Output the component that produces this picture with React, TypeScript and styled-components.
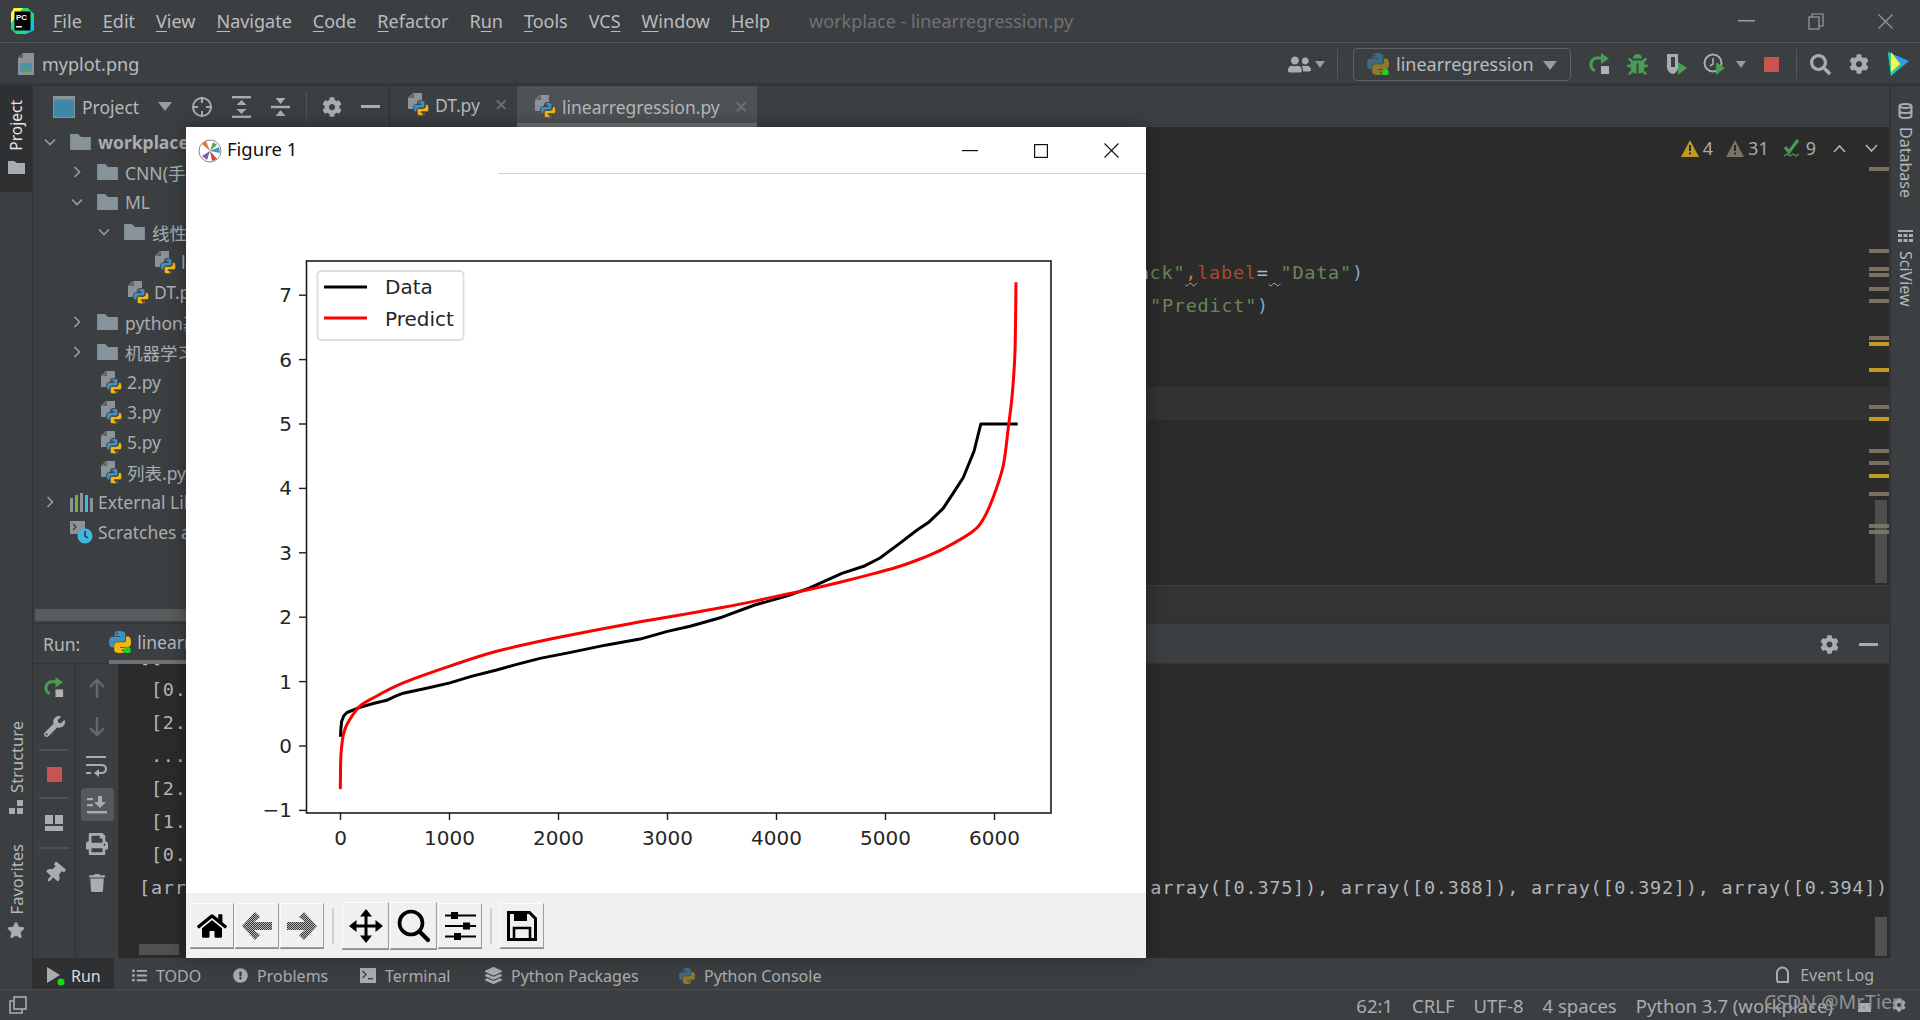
import React from "react";
import styled, { createGlobalStyle } from "styled-components";
import { FaCog, FaWrench, FaTrash, FaPrint, FaThumbtack, FaBug, FaStar, FaExclamationCircle, FaLayerGroup, FaHome, FaUserFriends, FaListUl, FaSearch } from "react-icons/fa";

const Global = createGlobalStyle`
  html, body { margin: 0; padding: 0; background: #3c3f41; overflow: hidden; }
  * { box-sizing: border-box; }
`;
const UI = `"Noto Sans", "Noto Sans CJK SC", "Liberation Sans", sans-serif`;
const MONO = `"DejaVu Sans Mono", "Liberation Mono", monospace`;

const Page = styled.div`
  position: relative; width: 1920px; height: 1020px; overflow: hidden;
  display: flex; flex-direction: column;
  background: #3c3f41; color: #b4b8bb; font-family: ${UI};
`;
const TitleBar = styled.header`
  height: 43px; flex: none; display: flex; align-items: center;
  border-bottom: 1px solid #515658; padding-left: 10px; position: relative;
`;
const MenuList = styled.nav`display: flex; margin-left: 18px; gap: 21px; font-size: 18px;`;
const MenuItem = styled.span`color: #b9bcbe; u { text-underline-offset: 3px; text-decoration-thickness: 1px; }`;
const WindowTitle = styled.span`margin-left: 39px; font-size: 18px; color: #6f7274;`;
const WinControls = styled.div`margin-left: auto; display: flex; align-items: center; gap: 53px; padding-right: 27px; color: #9b9ea0;`;

const NavBar = styled.div`height: 43px; flex: none; display: flex; align-items: center; padding: 2px 0 0 18px; border-bottom: 3px solid #333537;`;
const Crumb = styled.span`font-size: 18px; margin-left: 8px; color: #b9bcbe;`;
const NavGroup = styled.div`margin-left: auto; display: flex; align-items: center; padding-right: 10px;`;
const NavSlot = styled.span<{ $ml: number }>`display: inline-flex; align-items: center; margin-left: ${p => p.$ml}px;`;
const NavSep = styled.span<{ $ml: number }>`width: 1px; height: 30px; background: #56595b; margin-left: ${p => p.$ml}px;`;
const RunConfig = styled.div`
  width: 218px; height: 33px; margin-left: 15px; border: 1.5px solid #5e6265; border-radius: 4px;
  display: flex; align-items: center; padding-left: 13px; gap: 7px; font-size: 18px; color: #b9bcbe; position: relative;
`;
const ConfigCaret = styled.span`position: absolute; right: 13px; top: 12px; display: flex;`;
const Caret = styled.span<{ $c?: string; $s?: number }>`
  display: inline-block; width: 0; height: 0;
  border-left: ${p => p.$s ?? 6}px solid transparent; border-right: ${p => p.$s ?? 6}px solid transparent;
  border-top: ${p => (p.$s ?? 6) + 2}px solid ${p => p.$c ?? "#9a9da0"};
`;
const StopBox = styled.span<{ $size: number }>`display: block; width: ${p => p.$size}px; height: ${p => p.$size}px; background: #c75450;`;

const Main = styled.div`flex: 1; display: flex; min-height: 0;`;
const LeftStrip = styled.aside`width: 33px; flex: none; display: flex; flex-direction: column; align-items: center; border-right: 1px solid #2f3133; padding-bottom: 19px;`;
const StripActive = styled.div`width: 32px; height: 106px; background: #2e3032; display: flex; flex-direction: column; align-items: center; padding-top: 14px; gap: 10px;`;
const VertLabel = styled.span<{ $bright?: boolean }>`
  writing-mode: vertical-rl; transform: rotate(180deg); font-size: ${p => (p.$bright ? 15.5 : 16.5)}px;
  color: ${p => (p.$bright ? "#e6e6e6" : "#b4b8bb")};
`;
const StripGroup = styled.div<{ $top?: boolean }>`display: flex; flex-direction: column; align-items: center; gap: 7px; margin-top: ${p => (p.$top ? "auto" : "29px")};`;
const RightStrip = styled.aside`width: 31px; flex: none; display: flex; flex-direction: column; align-items: center; border-left: 2px solid #333537; padding-top: 17px; gap: 8px;`;
const VertRight = styled.span<{ $mb?: number }>`writing-mode: vertical-rl; font-size: 16px; color: #b4b8bb; margin-bottom: ${p => p.$mb ?? 0}px;`;

const Center = styled.div`flex: 1; min-width: 0; display: flex; flex-direction: column;`;
const TopArea = styled.div`height: 537px; flex: none; display: flex;`;
const ProjectPanel = styled.section`width: 357px; flex: none; display: flex; flex-direction: column; border-right: 1px solid #2f3133;`;
const PanelHeader = styled.div`height: 41px; flex: none; display: flex; align-items: center; padding-left: 20px; font-size: 17.5px; color: #b4b8bb;`;
const HSlot = styled.span<{ $ml: number }>`display: inline-flex; margin-left: ${p => p.$ml}px;`;
const HSep = styled.span<{ $ml: number }>`width: 1px; height: 30px; background: #515456; margin-left: ${p => p.$ml}px;`;
const Tree = styled.div`flex: 1; overflow: hidden;`;
const TreeRow = styled.div<{ $level: number }>`
  height: 30px; display: flex; align-items: center; white-space: nowrap;
  padding-left: ${p => 8 + p.$level * 27}px; font-size: 17.5px; color: #a9adb0;
`;
const Chev = styled.span`width: 18px; flex: none; display: flex; justify-content: center;`;
const TreeIcon = styled.span<{ $file?: boolean }>`
  display: flex; flex: none; width: ${p => (p.$file ? 21 : 21)}px;
  margin-left: ${p => (p.$file ? 33 : 11)}px; margin-right: ${p => (p.$file ? 5 : 7)}px;
`;
const TreeName = styled.span<{ $bold?: boolean }>`font-weight: ${p => (p.$bold ? 700 : 400)};`;
const HScroll = styled.div`height: 12px; margin: 0 0 2px 2px; background: #595b5d; flex: none;`;

const EditorCol = styled.section`flex: 1; min-width: 0; display: flex; flex-direction: column;`;
const TabBar = styled.div`height: 41px; flex: none; display: flex; font-size: 17.5px; color: #b4b8bb;`;
const Tab = styled.div<{ $active?: boolean; $w: number }>`
  width: ${p => p.$w}px; display: flex; align-items: center; padding-left: 18px; gap: 6px;
  background: ${p => (p.$active ? "#4e5254" : "transparent")};
  border-bottom: 4px solid ${p => (p.$active ? "#6e7275" : "transparent")};
  padding-top: ${p => (p.$active ? 4 : 0)}px;
`;
const TabX = styled.span`margin-left: 8px; color: #6f7274; font-size: 17px; font-weight: 300;`;
const Editor = styled.div`flex: 1; background: #2b2b2b; position: relative; overflow: hidden; padding-top: 129px;`;
const CodeRow = styled.div<{ $pad: number }>`
  height: 33px; line-height: 33px; white-space: pre; padding-left: ${p => p.$pad}px;
  font-family: ${MONO}; font-size: 18.5px; letter-spacing: 0.76px; color: #a9b7c6;
`;
const Str = styled.span`color: #6a8759;`;
const Kw = styled.span`color: #aa4926;`;
const Paren = styled.span`color: #7fa5c9;`;
const Wavy = styled.span<{ $c: string }>`color: ${p => p.$c}; text-decoration: underline wavy #b9a97e 1px; text-underline-offset: 3px;`;
const LineHL = styled.div`position: absolute; left: 0; right: 0; top: 260px; height: 33px; background: #323232;`;
const Mark = styled.i<{ $y: number; $hot?: boolean }>`
  position: absolute; right: 0; width: 20px; height: 4px; top: ${p => p.$y - 127}px;
  background: ${p => (p.$hot ? "#c19a1f" : "#7a7260")};
`;
const Thumb = styled.div`position: absolute; right: 2px; width: 12px; top: 373px; height: 83px; background: rgba(120,120,120,.45);`;
const Inspect = styled.div`position: absolute; right: 11px; top: 9px; display: flex; align-items: center; font-size: 18px; color: #a9adb0;`;
const InspectItem = styled.span<{ $ml: number }>`display: inline-flex; align-items: center; gap: 4px; margin-left: ${p => p.$ml}px;`;
const Breadbar = styled.div`height: 38px; flex: none; background: #313335; border-top: 1px solid #3a3c3e;`;

const RunPanel = styled.section`flex: 1; display: flex; flex-direction: column; min-height: 0; border-top: 1px solid #2f3133;`;
const RunHeader = styled.div`height: 40px; flex: none; display: flex; align-items: center; padding-left: 10px; border-bottom: 1px solid #323436; font-size: 17.5px; position: relative; color: #b4b8bb;`;
const RunTab = styled.div`margin-left: 29px; width: 98px; height: 40px; display: flex; align-items: center; gap: 6px; border-bottom: 4px solid #6e7275; white-space: nowrap; overflow: hidden;`;
const RunTools = styled.div`position: absolute; right: 11px; top: 11px; display: flex; align-items: center; gap: 20px; color: #a9adb0;`;
const RunBody = styled.div`flex: 1; display: flex; min-height: 0;`;
const RunCol = styled.div`width: 43px; flex: none; border-right: 1px solid #2f3133; display: flex; flex-direction: column; align-items: center; padding-top: 4px; color: #a9adb0;`;
const RunBtn = styled.div<{ $h?: number; $on?: boolean; $dim?: boolean }>`
  width: 33px; height: ${p => p.$h ?? 39}px; flex: none; display: flex; align-items: center; justify-content: center; border-radius: 4px;
  background: ${p => (p.$on ? "#56595c" : "transparent")}; color: ${p => (p.$dim ? "#66696b" : "#a9adb0")};
  ${p => (p.$on ? "height: 33px; margin: 3px 0;" : "")}
`;
const RunDiv = styled.i`width: 30px; height: 2px; background: #4e5153; flex: none; margin: 3px 0;`;
const Console = styled.div`
  flex: 1; min-width: 0; background: #2b2b2b; position: relative; overflow: hidden; padding-left: 20px;
  font-family: ${MONO}; font-size: 18.5px; letter-spacing: 0.76px; color: #b0b6bd;
`;
const ConsoleRow = styled.div<{ $first?: boolean }>`height: 33px; line-height: 33px; white-space: pre; margin-top: ${p => (p.$first ? -24 : 0)}px;`;
const ConsoleThumbV = styled.div`position: absolute; right: 2px; bottom: 2px; width: 12px; height: 39px; background: #4f5050;`;
const ConsoleThumbH = styled.div`position: absolute; left: 20px; bottom: 3px; width: 40px; height: 11px; background: #4f5050;`;

const BottomTabs = styled.div`height: 32px; flex: none; display: flex; align-items: stretch; padding-left: 32px; border-bottom: 1px solid #4a4d4f; font-size: 16px; color: #a9adb0; position: relative; z-index: 1;`;
const BTab = styled.div<{ $w: number; $on?: boolean; $pad?: number }>`
  width: ${p => p.$w}px; display: flex; align-items: center; gap: ${p => (p.$on ? 5 : 9)}px; flex: none;
  padding: 4px 0 0 ${p => p.$pad ?? 0}px;
  background: ${p => (p.$on ? "#2e3032" : "transparent")}; color: ${p => (p.$on ? "#dcdcdc" : "#a9adb0")};
`;
const EventLog = styled.div`margin-left: auto; margin-right: 46px; padding-top: 2px; display: flex; align-items: center; gap: 8px;`;
const StatusBar = styled.footer`height: 30px; flex: none; display: flex; align-items: center; padding-left: 9px; font-size: 18.5px; color: #a9adb0; position: relative;`;
const StatusRight = styled.div`margin-left: auto; display: flex; gap: 19px; padding-right: 87px;`;
const Watermark = styled.span`position: absolute; right: 16px; top: -2px; color: #8f9193; font-size: 19.5px;`;
const StatusIcons = styled.div`position: absolute; right: 14px; top: 8px; display: flex; gap: 21px; align-items: center; color: #a9adb0;`;

const Figure = styled.div`
  position: absolute; left: 186px; top: 127px; width: 960px; height: 831px; background: #fff;
  display: flex; flex-direction: column; box-shadow: 0 0 18px rgba(0,0,0,.35); color: #111; z-index: 2;
`;
const FigTitle = styled.div`height: 47px; flex: none; display: flex; align-items: center; padding-left: 12px; font-size: 18.5px; position: relative; color: #111;`;
const FigName = styled.span`margin: -4px 0 0 5px;`;
const FigRule = styled.i`position: absolute; left: 312px; right: 0; bottom: 0; height: 1px; background: #d4d4d4;`;
const FigControls = styled.div`margin-left: auto; display: flex; align-items: center; gap: 56px; padding-right: 27px;`;
const Plot = styled.svg`display: block; flex: none;`;
const FigBar = styled.div`height: 65px; flex: none; background: #f0f0f0; display: flex; align-items: center; gap: 1px; padding-left: 4px;`;
const FigBtn = styled.button<{ $w: number; $big?: boolean }>`
  width: ${p => p.$w}px; height: ${p => (p.$big ? 47 : 45)}px; flex: none; padding: 0; display: flex; align-items: center; justify-content: center;
  background: #f0f0f0; color: #000; border: 1px solid; border-color: #fbfbfb #9d9d9d #9d9d9d #fbfbfb;
  box-shadow: 0 1px 0 #8e8e8e;
`;
const FigSep = styled.i`width: 2px; height: 36px; background: #d0d0d0; margin: 0 7px; flex: none;`;

/* ---------- drawings ---------- */
const PY_B = "M11.914 0C5.82 0 6.2 2.656 6.2 2.656l.007 2.752h5.814v.826H3.9S0 5.789 0 11.969c0 6.18 3.403 5.96 3.403 5.96h2.03v-2.867s-.109-3.42 3.35-3.42h5.766s3.24.052 3.24-3.148V3.202S18.28 0 11.913 0zM8.708 1.85c.578 0 1.046.47 1.046 1.052 0 .581-.468 1.051-1.046 1.051-.579 0-1.046-.47-1.046-1.051 0-.582.467-1.052 1.046-1.052z";
const PY_Y = "M12.087 24c6.092 0 5.712-2.656 5.712-2.656l-.007-2.752h-5.814v-.826h8.123s3.9.445 3.9-5.735c0-6.18-3.404-5.96-3.404-5.96h-2.03v2.867s.109 3.42-3.35 3.42H8.951s-3.24-.052-3.24 3.148v5.292S5.22 24 12.087 24zm3.206-1.85c-.578 0-1.046-.47-1.046-1.052 0-.581.468-1.051 1.046-1.051.579 0 1.046.47 1.046 1.051 0 .582-.467 1.052-1.046 1.052z";
const Py = ({ s = 22, dim = false, dot = false }: { s?: number; dim?: boolean; dot?: boolean }) => (
  <svg width={s} height={s} viewBox="0 0 24 24" style={{ flex: "none" }}>
    <path d={PY_B} fill={dim ? "#3f6a85" : "#3c92c4"} />
    <path d={PY_Y} fill={dim ? "#8d7a2c" : "#f2b80f"} />
    {dot && <circle cx="20" cy="21" r="3.6" fill="#16d916" />}
  </svg>
);
const PyFile = () => (
  <svg width="21" height="23" viewBox="0 0 21 23" style={{ flex: "none" }}>
    <path d="M5 0h9v16H0V5z" fill="#8a9399" />
    <path d="M1 5l5-5v5z" fill="#5d6367" />
    <g transform="translate(5.5 7.5) scale(.64)">
      <path d={PY_B} fill="#3c92c4" stroke="#3c3f41" strokeWidth="1.4" />
      <path d={PY_Y} fill="#f2b80f" stroke="#3c3f41" strokeWidth="1.4" />
    </g>
  </svg>
);
const Folder = ({ w = 21 }: { w?: number }) => (
  <svg width={w} height={w * 0.8} viewBox="0 0 21 17"><path d="M0 0h8l3 3h10v14H0z" fill="#87939a" /></svg>
);
const ChevIcon = ({ open }: { open?: boolean }) => (
  <svg width="14" height="14" viewBox="0 0 14 14" fill="none" stroke="#9a9da0" strokeWidth="1.6">
    <path d={open ? "M2 4.5l5 5 5-5" : "M4.5 2l5 5-5 5"} />
  </svg>
);
const ImgFile = () => (
  <svg width="16" height="22" viewBox="0 0 16 22"><path d="M5 0h11v22H0V5z" fill="#8a9399" /><path d="M0 5l5-5v5z" fill="#5d6367" /><rect x="2" y="10" width="12" height="9" fill="#4a92a8" /><path d="M2 19l5-5 7 5z" fill="#5a9e58" /></svg>
);
const Rerun = ({ s = 22 }: { s?: number }) => (
  <svg width={s} height={s} viewBox="0 0 22 22" fill="none">
    <path d="M15 5H9a6.500 6.500 0 0 0-3 12.500" stroke="#499c54" strokeWidth="3.2" />
    <path d="M12 0l8 5.500-8 5.500z" fill="#499c54" />
    <rect x="12" y="13" width="8" height="8" fill="#b0b2b4" />
  </svg>
);
const Cover = () => (
  <svg width="23" height="24" viewBox="0 0 23 24"><path d="M1 2h11v14q-1 5-5 6-5-1-6-6z" fill="#a9adb0" /><path d="M5 5h4v10H5z" fill="#3c3f41" /><path d="M12 10l9 6-9 7z" fill="#499c54" /></svg>
);
const Profile = () => (
  <svg width="24" height="24" viewBox="0 0 24 24" fill="none"><circle cx="10" cy="11" r="8.5" stroke="#a9adb0" strokeWidth="2" /><path d="M10 6v6l-3 2" stroke="#a9adb0" strokeWidth="1.6" /><path d="M13 10l9 6-9 7z" fill="#499c54" /></svg>
);
const PcLogo = () => (
  <svg width="25" height="28" viewBox="0 0 25 28">
    <path d="M4 1h14l6 6v16l-8 4H6l-5-5V6z" fill="#21d789" />
    <path d="M4 1h9L1 16V6z" fill="#fcf84a" />
    <path d="M16 27l8-4V10z" fill="#07c3f2" />
    <rect x="4.5" y="4.5" width="16" height="19" fill="#000" />
    <text x="6" y="13" fontSize="8" fontWeight="700" fill="#fff" fontFamily="Liberation Sans">PC</text>
    <rect x="6" y="19" width="6" height="1.5" fill="#fff" />
  </svg>
);
const IdeLogo = () => (
  <svg width="23" height="26" viewBox="0 0 23 26"><path d="M1 1l21 9L4 25z" fill="#2f9ee0" /><path d="M1 1l14 12-11 12z" fill="#21d789" /><path d="M4 1l9 12-9 8z" fill="#fcf84a" /></svg>
);
const Tri = ({ c, mark = "#2b2b2b" }: { c: string; mark?: string }) => (
  <svg width="18" height="17" viewBox="0 0 18 17"><path d="M9 0l9 17H0z" fill={c} /><rect x="8" y="5" width="2" height="6" fill={mark} /><rect x="8" y="12.5" width="2" height="2" fill={mark} /></svg>
);
const Check = () => (
  <svg width="19" height="19" viewBox="0 0 19 19" fill="none"><path d="M2 8l4 5 9-12" stroke="#499c54" strokeWidth="3.2" /><path d="M1 17l3-2 3 2 3-2 3 2 3-2" stroke="#499c54" strokeWidth="1.2" /></svg>
);
const SmallChevron = ({ up }: { up?: boolean }) => (
  <svg width="13" height="9" viewBox="0 0 13 9" fill="none" stroke="#b0b3b5" strokeWidth="1.6"><path d={up ? "M1 8l5.5-6L12 8" : "M1 1l5.5 6L12 1"} /></svg>
);
const Locate = () => (
  <svg width="22" height="22" viewBox="0 0 22 22" fill="none" stroke="#a9adb0" strokeWidth="2"><circle cx="11" cy="11" r="9" /><path d="M11 1v6M11 15v6M1 11h6M15 11h6" /></svg>
);
const ExpandAll = () => (
  <svg width="19" height="22" viewBox="0 0 19 22" fill="#a9adb0"><rect width="19" height="2.4" /><rect y="19.6" width="19" height="2.4" /><path d="M9.5 4l5 5h-10zM9.5 18l5-5h-10z" /></svg>
);
const CollapseAll = () => (
  <svg width="19" height="22" viewBox="0 0 19 22" fill="#a9adb0"><rect y="9.8" width="19" height="2.4" /><path d="M9.5 8l5-6h-10zM9.5 14l5 6h-10z" /></svg>
);
const WinIcon = () => (
  <svg width="22" height="22" viewBox="0 0 22 22"><rect x=".5" y=".5" width="21" height="21" fill="#3f87a6" stroke="#8a9399" /><rect x=".5" y=".5" width="21" height="3" fill="#8a9399" /></svg>
);
const Minus = () => <svg width="19" height="4" viewBox="0 0 19 4"><rect width="19" height="3" fill="#a9adb0" /></svg>;
const Wrap = () => (
  <svg width="22" height="22" viewBox="0 0 22 22" fill="none" stroke="#a9adb0" strokeWidth="2"><path d="M0 2h20M0 10h15q5 0 5 4t-5 4H11M0 18h5" /><path d="M13 14l-5 4 5 4z" fill="#a9adb0" stroke="none" /></svg>
);
const ScrollEnd = () => (
  <svg width="20" height="18" viewBox="0 0 20 18" fill="#a9adb0"><rect y="15" width="20" height="2.4" /><rect y="2" width="6" height="2.2" /><rect y="8" width="6" height="2.2" /><path d="M11 0h4v6h4l-6 6-6-6h4z" /></svg>
);
const Arrow = ({ up }: { up?: boolean }) => (
  <svg width="16" height="20" viewBox="0 0 16 20" fill="none" stroke="#66696b" strokeWidth="2.4"><path d={up ? "M8 20V2M1 9l7-7 7 7" : "M8 0v18M1 11l7 7 7-7"} /></svg>
);
const Layout = () => (
  <svg width="18" height="16" viewBox="0 0 18 16" fill="#a9adb0"><rect width="8" height="9" /><rect x="10" width="8" height="9" /><rect y="11" width="18" height="5" /></svg>
);
const SmallFolder = () => <svg width="17" height="13" viewBox="0 0 17 13"><path d="M0 0h6l3 2h8v11H0z" fill="#a9adb0" /></svg>;
const Cubes = () => <svg width="15" height="15" viewBox="0 0 15 15" fill="#a9adb0"><rect x="0" y="8" width="6" height="6" /><rect x="8" y="8" width="6" height="6" /><rect x="8" y="0" width="6" height="6" /></svg>;
const Db = () => <svg width="15" height="16" viewBox="0 0 15 16" fill="none" stroke="#a9adb0" strokeWidth="2"><ellipse cx="7.5" cy="3" rx="6" ry="2" /><path d="M1.5 3v10c0 1 2.5 2 6 2s6-1 6-2V3M1.500 8c0 1 2.500 2 6 2s6-1 6-2" /></svg>;
const Grid3 = () => <svg width="15" height="13" viewBox="0 0 15 13" fill="#a9adb0"><rect width="15" height="2" /><rect y="4" width="4" height="3" /><rect x="5.500" y="4" width="4" height="3" /><rect x="11" y="4" width="4" height="3" /><rect y="9" width="4" height="3" /><rect x="5.500" y="9" width="4" height="3" /><rect x="11" y="9" width="4" height="3" /></svg>;
const Bars = () => <svg width="23" height="19" viewBox="0 0 23 19" style={{ flex: "none" }}><rect y="5" width="3" height="14" fill="#8a9399" /><rect x="5" y="2" width="3" height="17" fill="#6cb33f" /><rect x="10" y="0" width="3" height="19" fill="#8a9399" /><rect x="15" y="2" width="3" height="17" fill="#40b6e0" /><rect x="20" y="5" width="3" height="14" fill="#8a9399" /></svg>;
const Scratch = () => (
  <svg width="23" height="23" viewBox="0 0 23 23" style={{ flex: "none" }}><rect y="0" width="15" height="13" fill="#8a9399" /><path d="M3 3l3 3-3 3" fill="none" stroke="#3c3f41" strokeWidth="1.4" /><circle cx="15" cy="15" r="7.500" fill="#40b6e0" /><path d="M15 10v5l3 2" fill="none" stroke="#26343c" strokeWidth="1.5" /></svg>
);
const RunPlay = () => <svg width="20" height="20" viewBox="0 0 20 20"><path d="M1 1l13 8L1 17z" fill="#a9adb0" /><circle cx="15" cy="16" r="3.500" fill="#16d916" /></svg>;
const EventIcon = () => <svg width="19" height="20" viewBox="0 0 19 20" fill="none" stroke="#a9adb0" strokeWidth="2"><path d="M5 17h10V8a5.500 5.500 0 0 0-11 0v6q0 3 1 3z" /></svg>;
const TermIcon = () => <svg width="16" height="15" viewBox="0 0 16 15"><rect width="16" height="15" fill="#a9adb0" /><path d="M2.500 3l3.500 3.500-3.500 3.500" fill="none" stroke="#3c3f41" strokeWidth="1.400" /><rect x="8" y="10" width="5" height="1.400" fill="#3c3f41" /></svg>;
const StatusBox = () => <svg width="18" height="18" viewBox="0 0 18 18" fill="none" stroke="#a9adb0" strokeWidth="1.6"><rect x="5" y="1" width="12" height="12" /><path d="M5 5H1v12h12v-4" /></svg>;
const Restore = () => <svg width="17" height="17" viewBox="0 0 17 17" fill="none" stroke="#9b9ea0" strokeWidth="1.2"><rect x="1" y="4" width="10" height="12" /><path d="M4 4V1h11v12h-4" /></svg>;
const XMark = ({ s = 15, c = "#9b9ea0" }: { s?: number; c?: string }) => <svg width={s} height={s} viewBox="0 0 15 15" fill="none" stroke={c} strokeWidth="1.1"><path d="M.5.500l14 14M14.500.500l-14 14" /></svg>;
const Mpl = () => (
  <svg width="24" height="24" viewBox="0 0 24 24"><circle cx="12" cy="12" r="11" fill="#fff" stroke="#888" /><path d="M12 12L4 5l4-3z" fill="#e0783a" /><path d="M12 12l9-4 1 6z" fill="#4a90c2" /><path d="M12 12l-3 9-5-4z" fill="#7a5ea8" /><path d="M12 12l3-9 4 3z" fill="#5aa45a" /><path d="M12 12l7 8-5 2z" fill="#c44" /></svg>
);
const Dither = ({ left }: { left?: boolean }) => (
  <svg width="30" height="30" viewBox="0 0 30 30">
    <defs><pattern id={left ? "dl" : "dr"} width="2" height="2" patternUnits="userSpaceOnUse"><rect width="2" height="2" fill="#bdbdbd" /><rect width="1" height="1" fill="#333" /><rect x="1" y="1" width="1" height="1" fill="#333" /></pattern></defs>
    <path d={left ? "M0 15L13 1l5 5-6 5h18v8H12l6 5-5 5z" : "M30 15L17 1l-5 5 6 5H0v8h18l-6 5 5 5z"} fill={`url(#${left ? "dl" : "dr"})`} />
  </svg>
);
const PanIcon = () => (
  <svg width="34" height="34" viewBox="0 0 34 34"><path d="M15.500 7h3v8.500H27v3h-8.500V27h-3v-8.500H7v-3h8.500z" /><path d="M17 0l6 7.500H11zM17 34l-6-7.500h12zM0 17l7.500-6v12zM34 17l-7.500 6V11z" /></svg>
);
const ZoomIcon = () => (
  <svg width="34" height="34" viewBox="0 0 34 34" fill="none" stroke="#000"><circle cx="14" cy="14" r="11.500" strokeWidth="3.600" /><path d="M22.500 22.500L31 31" strokeWidth="4.200" strokeLinecap="round" /></svg>
);
const SliderIcon = () => (
  <svg width="31" height="28" viewBox="0 0 31 28"><path d="M0 3.500h31M0 14h31M0 24.500h31" stroke="#000" strokeWidth="1.800" /><rect x="6" y="0" width="7" height="7" /><rect x="18" y="10.500" width="7" height="7" /><rect x="9" y="21" width="7" height="7" /></svg>
);
const SaveIcon = () => (
  <svg width="30" height="30" viewBox="0 0 30 30" fill="none" stroke="#000" strokeWidth="3"><path d="M1.500 1.500h21l6 6v21h-27z" /><rect x="7" y="2" width="13" height="8" fill="#000" stroke="none" /><path d="M7 28V17h16v11" strokeWidth="2.600" /></svg>
);

/* ---------- chart data ---------- */
const black: [number, number][] = [[0,.145],[3,.25],[10,.38],[30,.47],[60,.52],[178,.6],[300,.66],[424,.71],[500,.77],[575,.82],[800,.9],[1004,.98],[1200,1.08],[1432,1.18],[1600,1.26],[1830,1.36],[2100,1.45],[2442,1.57],[2748,1.66],[3000,1.78],[3207,1.86],[3500,2.0],[3800,2.19],[4100,2.33],[4300,2.45],[4600,2.68],[4800,2.79],[4950,2.92],[5133,3.15],[5287,3.35],[5400,3.48],[5529,3.69],[5630,3.95],[5714,4.17],[5813,4.58],[5874,5],[6213,5]];
const red: [number, number][] = [[-2,-.67],[2,-.22],[10,-.02],[23,.145],[50,.3],[102,.455],[178,.62],[298,.745],[575,.98],[1004,1.24],[1432,1.47],[1983,1.68],[2593,1.88],[3207,2.06],[3500,2.15],[3800,2.25],[4100,2.36],[4300,2.43],[4600,2.55],[4900,2.68],[5133,2.79],[5340,2.92],[5529,3.06],[5790,3.32],[5896,3.52],[5988,3.86],[6080,4.35],[6126,4.93],[6162,5.45],[6188,6.13],[6197,7.2]];
const px = (x: number) => 154.5 + x * 0.109;
const py = (y: number) => 572 - y * 64.4;
const pts = (a: [number, number][]) => a.map(([x, y]) => `${px(x).toFixed(1)},${py(y).toFixed(1)}`).join(" ");
const spline = (a: [number, number][]) => {
  const q = a.map(([x, y]) => [px(x), py(y)]);
  let d = `M${q[0][0].toFixed(1)} ${q[0][1].toFixed(1)}`;
  for (let i = 0; i < q.length - 1; i++) {
    const p0 = q[Math.max(i - 1, 0)], p1 = q[i], p2 = q[i + 1], p3 = q[Math.min(i + 2, q.length - 1)];
    const c1 = [p1[0] + (p2[0] - p0[0]) / 6, p1[1] + (p2[1] - p0[1]) / 6];
    const c2 = [p2[0] - (p3[0] - p1[0]) / 6, p2[1] - (p3[1] - p1[1]) / 6];
    d += `C${c1[0].toFixed(1)} ${c1[1].toFixed(1)} ${c2[0].toFixed(1)} ${c2[1].toFixed(1)} ${p2[0].toFixed(1)} ${p2[1].toFixed(1)}`;
  }
  return d;
};

const Chart = () => (
  <Plot width="960" height="719" viewBox="0 0 960 719">
    <rect x="120.500" y="87" width="744.500" height="552" fill="#fff" stroke="#1c1c1c" strokeWidth="1.6" />
    {[0, 1000, 2000, 3000, 4000, 5000, 6000].map(v => (
      <g key={v}>
        <line x1={px(v)} x2={px(v)} y1="639" y2="646" stroke="#1c1c1c" strokeWidth="1.4" />
        <text x={px(v)} y="671" textAnchor="middle" fontFamily="DejaVu Sans" fontSize="20" fill="#262626">{v}</text>
      </g>
    ))}
    {[-1, 0, 1, 2, 3, 4, 5, 6, 7].map(v => (
      <g key={v}>
        <line x1="113" x2="120.500" y1={py(v)} y2={py(v)} stroke="#1c1c1c" strokeWidth="1.4" />
        <text x="106" y={py(v) + 7} textAnchor="end" fontFamily="DejaVu Sans" fontSize="20" fill="#262626">{v < 0 ? `−${-v}` : v}</text>
      </g>
    ))}
    <polyline points={pts(black)} fill="none" stroke="#000" strokeWidth="3" strokeLinejoin="round" />
    <path d={spline(red)} fill="none" stroke="#f00" strokeWidth="3" strokeLinejoin="round" />
    <rect x="131.500" y="97" width="146" height="69" rx="4" fill="#fff" fillOpacity=".85" stroke="#dcdcdc" strokeWidth="1.800" />
    <line x1="138" x2="181" y1="113" y2="113" stroke="#000" strokeWidth="3" />
    <line x1="138" x2="181" y1="144" y2="144" stroke="#f00" strokeWidth="3" />
    <text x="199" y="120" fontFamily="DejaVu Sans" fontSize="20" fill="#262626">Data</text>
    <text x="199" y="152" fontFamily="DejaVu Sans" fontSize="20" fill="#262626">Predict</text>
  </Plot>
);

const menus: [string, string, string][] = [["", "F", "ile"], ["", "E", "dit"], ["", "V", "iew"], ["", "N", "avigate"], ["", "C", "ode"], ["", "R", "efactor"], ["R", "u", "n"], ["", "T", "ools"], ["VC", "S", ""], ["", "W", "indow"], ["", "H", "elp"]];
const marks: [number, boolean?][] = [[167],[249],[267],[273],[287],[299],[336],[342,true],[368,true],[405],[417,true],[449],[461],[474,true],[492],[524],[530]];
type T = { l: number; name: string; kind: "dir" | "open" | "file" | "ext" | "scr"; bold?: boolean };
const tree: T[] = [
  { l: 0, name: "workplace", kind: "open", bold: true },
  { l: 1, name: "CNN(手写数字)", kind: "dir" },
  { l: 1, name: "ML", kind: "open" },
  { l: 2, name: "线性回归", kind: "open" },
  { l: 3, name: "linearregression.py", kind: "file" },
  { l: 2, name: "DT.py", kind: "file" },
  { l: 1, name: "python基础", kind: "dir" },
  { l: 1, name: "机器学习", kind: "dir" },
  { l: 1, name: "2.py", kind: "file" },
  { l: 1, name: "3.py", kind: "file" },
  { l: 1, name: "5.py", kind: "file" },
  { l: 1, name: "列表.py", kind: "file" },
  { l: 0, name: "External Libraries", kind: "ext" },
  { l: 0, name: "Scratches and Consoles", kind: "scr" },
];

export default function App() {
  return (
    <Page>
      <Global />
      <TitleBar>
        <PcLogo />
        <MenuList>
          {menus.map(([a, b, c]) => <MenuItem key={a + b + c}>{a}<u>{b}</u>{c}</MenuItem>)}
        </MenuList>
        <WindowTitle>workplace - linearregression.py</WindowTitle>
        <WinControls>
          <svg width="17" height="2"><rect width="17" height="1.5" fill="#9b9ea0" /></svg>
          <Restore />
          <XMark />
        </WinControls>
      </TitleBar>
      <NavBar>
        <ImgFile />
        <Crumb>myplot.png</Crumb>
        <NavGroup>
          <NavSlot $ml={0}><FaUserFriends size={23} color="#a9adb0" /></NavSlot>
          <NavSlot $ml={4}><Caret $s={5} /></NavSlot>
          <NavSep $ml={12} />
          <RunConfig>
            <Py s={22} dim dot />
            <span>linearregression</span>
            <ConfigCaret><Caret $s={7} /></ConfigCaret>
          </RunConfig>
          <NavSlot $ml={18}><Rerun /></NavSlot>
          <NavSlot $ml={16}><FaBug size={21} color="#499c54" /></NavSlot>
          <NavSlot $ml={18}><Cover /></NavSlot>
          <NavSlot $ml={14}><Profile /></NavSlot>
          <NavSlot $ml={9}><Caret $s={5} /></NavSlot>
          <NavSlot $ml={18}><StopBox $size={15} /></NavSlot>
          <NavSep $ml={17} />
          <NavSlot $ml={13}><FaSearch size={21} color="#a9adb0" /></NavSlot>
          <NavSlot $ml={18}><FaCog size={20} color="#a9adb0" /></NavSlot>
          <NavSlot $ml={18}><IdeLogo /></NavSlot>
        </NavGroup>
      </NavBar>
      <Main>
        <LeftStrip>
          <StripActive>
            <VertLabel $bright>Project</VertLabel>
            <SmallFolder />
          </StripActive>
          <StripGroup $top>
            <VertLabel>Structure</VertLabel>
            <Cubes />
          </StripGroup>
          <StripGroup>
            <VertLabel>Favorites</VertLabel>
            <FaStar size={18} color="#a9adb0" />
          </StripGroup>
        </LeftStrip>
        <Center>
          <TopArea>
            <ProjectPanel>
              <PanelHeader>
                <WinIcon />
                <HSlot $ml={7}>Project</HSlot>
                <HSlot $ml={19}><Caret $s={7} /></HSlot>
                <HSlot $ml={19}><Locate /></HSlot>
                <HSlot $ml={19}><ExpandAll /></HSlot>
                <HSlot $ml={20}><CollapseAll /></HSlot>
                <HSep $ml={16} />
                <HSlot $ml={15}><FaCog size={20} color="#a9adb0" /></HSlot>
                <HSlot $ml={19}><Minus /></HSlot>
              </PanelHeader>
              <Tree>
                {tree.map(t => (
                  <TreeRow key={t.name} $level={t.l}>
                    {t.kind !== "file" && <Chev>{t.kind !== "scr" && <ChevIcon open={t.kind === "open"} />}</Chev>}
                    <TreeIcon $file={t.kind === "file"}>
                      {t.kind === "file" ? <PyFile /> : t.kind === "ext" ? <Bars /> : t.kind === "scr" ? <Scratch /> : <Folder />}
                    </TreeIcon>
                    <TreeName $bold={t.bold}>{t.name}</TreeName>
                  </TreeRow>
                ))}
              </Tree>
              <HScroll />
            </ProjectPanel>
            <EditorCol>
              <TabBar>
                <Tab $w={127}><PyFile /><span>DT.py</span><TabX>✕</TabX></Tab>
                <Tab $w={240} $active><PyFile /><span>linearregression.py</span><TabX>✕</TabX></Tab>
              </TabBar>
              <Editor>
                <LineHL />
                <CodeRow $pad={712}>"bla<Str>ck"</Str><Wavy $c="#cc7832">,</Wavy><Kw>label</Kw>=<Wavy $c="#a9b7c6"> </Wavy><Str>"Data"</Str><Paren>)</Paren></CodeRow>
                <CodeRow $pad={760}><Str>"Predict"</Str><Paren>)</Paren></CodeRow>
                {marks.map(([y, hot]) => <Mark key={y} $y={y} $hot={hot} />)}
                <Thumb />
                <Inspect>
                  <InspectItem $ml={0}><Tri c="#c19a1f" />4</InspectItem>
                  <InspectItem $ml={13}><Tri c="#7a7260" />31</InspectItem>
                  <InspectItem $ml={14}><Check />9</InspectItem>
                  <InspectItem $ml={17}><SmallChevron up /></InspectItem>
                  <InspectItem $ml={19}><SmallChevron /></InspectItem>
                </Inspect>
              </Editor>
              <Breadbar />
            </EditorCol>
          </TopArea>
          <RunPanel>
            <RunHeader>
              Run:
              <RunTab><Py s={22} dot />linearregression</RunTab>
              <RunTools><FaCog size={19} /><Minus /></RunTools>
            </RunHeader>
            <RunBody>
              <RunCol>
                <RunBtn><Rerun s={21} /></RunBtn>
                <RunBtn><FaWrench size={21} /></RunBtn>
                <RunDiv />
                <RunBtn $h={40}><StopBox $size={15} /></RunBtn>
                <RunDiv />
                <RunBtn $h={42}><Layout /></RunBtn>
                <RunDiv />
                <RunBtn $h={42}><FaThumbtack size={21} style={{ transform: "rotate(40deg)" }} /></RunBtn>
              </RunCol>
              <RunCol>
                <RunBtn $dim><Arrow up /></RunBtn>
                <RunBtn $dim><Arrow /></RunBtn>
                <RunBtn><Wrap /></RunBtn>
                <RunBtn $on><ScrollEnd /></RunBtn>
                <RunBtn><FaPrint size={22} /></RunBtn>
                <RunBtn><FaTrash size={18} /></RunBtn>
              </RunCol>
              <Console>
                <ConsoleRow $first>{"[["}</ConsoleRow>
                <ConsoleRow>{" [0.625]"}</ConsoleRow>
                <ConsoleRow>{" [2.375]"}</ConsoleRow>
                <ConsoleRow>{" ..."}</ConsoleRow>
                <ConsoleRow>{" [2.188]"}</ConsoleRow>
                <ConsoleRow>{" [1.125]"}</ConsoleRow>
                <ConsoleRow>{" [0.875]"}</ConsoleRow>
                <ConsoleRow>{"[array([0.149998]), array([0.2750]), array([0.325]), array([0.342]), array([0.350]), array([0.375]), array([0.388]), array([0.392]), array([0.394])"}</ConsoleRow>
                <ConsoleThumbH />
                <ConsoleThumbV />
              </Console>
            </RunBody>
          </RunPanel>
        </Center>
        <RightStrip>
          <Db />
          <VertRight $mb={24}>Database</VertRight>
          <Grid3 />
          <VertRight>SciView</VertRight>
        </RightStrip>
      </Main>
      <BottomTabs>
        <BTab $w={82} $on $pad={14}><RunPlay />Run</BTab>
        <BTab $w={119} $pad={18}><FaListUl size={15} />TODO</BTab>
        <BTab $w={127}><FaExclamationCircle size={15} />Problems</BTab>
        <BTab $w={125}><TermIcon />Terminal</BTab>
        <BTab $w={194}><FaLayerGroup size={17} />Python Packages</BTab>
        <BTab $w={180}><Py s={16} dim />Python Console</BTab>
        <EventLog><EventIcon />Event Log</EventLog>
      </BottomTabs>
      <StatusBar>
        <StatusBox />
        <StatusRight>
          <span>62:1</span><span>CRLF</span><span>UTF-8</span><span>4 spaces</span><span>Python 3.7 (workplace)</span>
        </StatusRight>
        <StatusIcons>
          <svg width="13" height="14" viewBox="0 0 13 14"><rect y="5" width="13" height="9" fill="#a9adb0" /></svg>
          <FaCog size={14} />
        </StatusIcons>
        <Watermark>CSDN @Mr.Tien</Watermark>
      </StatusBar>
      <Figure>
        <FigTitle>
          <Mpl />
          <FigName>Figure 1</FigName>
          <FigControls>
            <svg width="16" height="2"><rect width="16" height="1.2" fill="#111" /></svg>
            <svg width="14" height="14" viewBox="0 0 14 14" fill="none" stroke="#111" strokeWidth="1.2"><rect x=".6" y=".6" width="12.800" height="12.800" /></svg>
            <XMark s={15} c="#111" />
          </FigControls>
          <FigRule />
        </FigTitle>
        <Chart />
        <FigBar>
          <FigBtn $w={44}><FaHome size={30} /></FigBtn>
          <FigBtn $w={44}><Dither left /></FigBtn>
          <FigBtn $w={44}><Dither /></FigBtn>
          <FigSep />
          <FigBtn $w={47} $big><PanIcon /></FigBtn>
          <FigBtn $w={47} $big><ZoomIcon /></FigBtn>
          <FigBtn $w={44}><SliderIcon /></FigBtn>
          <FigSep />
          <FigBtn $w={44}><SaveIcon /></FigBtn>
        </FigBar>
      </Figure>
    </Page>
  );
}
